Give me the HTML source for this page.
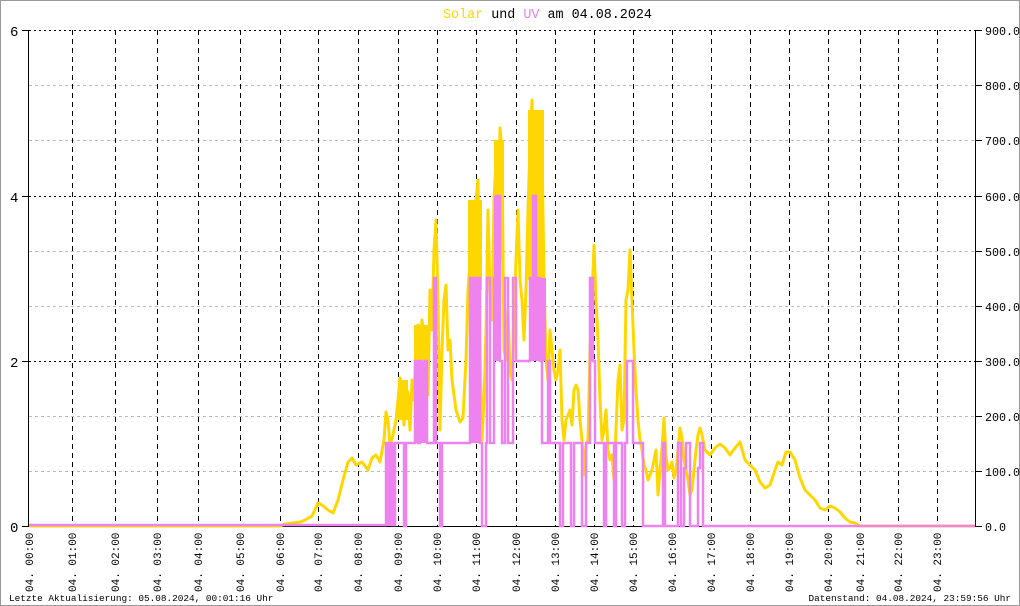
<!DOCTYPE html>
<html><head><meta charset="utf-8"><style>
html,body{margin:0;padding:0;background:#fff}
svg{display:block}
text{font-family:"Liberation Mono","DejaVu Sans Mono",monospace}
</style></head><body>
<svg width="1020" height="606" viewBox="0 0 1020 606" xmlns="http://www.w3.org/2000/svg">
<rect x="0.5" y="0.5" width="1019" height="605" fill="#fff" stroke="#999"/>
<text x="443" y="18" font-size="13.4" fill="#000"><tspan fill="#ffd700">Solar</tspan> und <tspan fill="#ee82ee">UV</tspan> am 04.08.2024</text>
<g stroke="#bbb" stroke-dasharray="3,3" stroke-width="1">
<path d="M29 85.5H975M29 140.5H975M29 251.5H975M29 306.5H975M29 416.5H975M29 471.5H975"/>
</g>
<g stroke="#000" stroke-dasharray="2,3" stroke-width="1">
<path d="M29 30.5H975M29 196.5H975M29 361.5H975"/>
</g>
<g stroke="#000" stroke-dasharray="5,4" stroke-width="1">
<path d="M72.5 30V526M115.5 30V526M157.5 30V526M198.5 30V526M240.5 30V526M280.5 30V526M318.5 30V526M358.5 30V526M398.5 30V526M437.5 30V526M476.5 30V526M516.5 30V526M555.5 30V526M594.5 30V526M633.5 30V526M672.5 30V526M711.5 30V526M750.5 30V526M789.5 30V526M828.5 30V526M860.5 30V526M898.5 30V526M937.5 30V526"/>
</g>
<g stroke="#000" stroke-width="1">
<path d="M28.5 30V527M975.5 30V527M28 526.5H976"/>
<path d="M22 30.5H29M22 196.5H29M22 361.5H29M22 526.5H29"/>
<path d="M975 30.5H982M975 85.5H982M975 140.5H982M975 196.5H982M975 251.5H982M975 306.5H982M975 361.5H982M975 416.5H982M975 471.5H982M975 526.5H982"/>
</g>
<g font-size="14" fill="#000">
<text x="10" y="36">6</text><text x="10" y="202">4</text><text x="10" y="367">2</text><text x="10" y="532">0</text>
</g>
<g font-size="11.7" fill="#000">
<text x="985" y="35">900.0</text><text x="985" y="90">800.0</text><text x="985" y="145">700.0</text><text x="985" y="201">600.0</text><text x="985" y="256">500.0</text><text x="985" y="311">400.0</text><text x="985" y="366">300.0</text><text x="985" y="421">200.0</text><text x="985" y="476">100.0</text><text x="985" y="531">0.0</text>
</g>
<!-- dense solar fills -->
<g fill="#ffd700">
<rect x="414" y="325" width="14" height="70"/>
<rect x="468" y="200" width="14" height="90"/>
<rect x="494" y="140" width="10" height="120"/>
<rect x="528" y="110" width="16" height="170"/>
<rect x="398" y="380" width="10" height="40"/>
</g>
<polyline fill="none" stroke="#ffd700" stroke-width="3" stroke-linejoin="round" points="29,526 280,526 285,524 300,522 305,520 312,516 318,503 322,505 328,510 333,513 338,500 343,480 348,462 352,458 356,465 362,462 368,470 372,458 376,455 380,462 384,440 386,412 388,420 390,445 393,435 396,420 398,400 400,378 402,395 404,425 406,400 408,392 410,430 412,380 414,400 416,350 418,325 420,355 422,320 424,345 426,330 428,395 430,290 432,330 434,250 436,220 438,300 440,430 442,350 444,300 446,285 448,350 450,340 452,380 456,410 460,422 463,418 466,360 468,290 470,262 472,210 474,240 476,200 478,180 480,350 482,440 484,400 486,330 488,210 490,290 492,320 494,200 496,160 498,240 500,128 502,150 504,350 506,360 508,310 510,370 512,380 514,330 516,260 518,210 520,280 522,300 524,340 526,290 528,210 530,145 532,100 534,200 536,120 538,160 540,210 542,150 544,280 546,360 548,380 550,330 552,350 554,370 556,380 558,370 560,350 562,420 564,440 566,420 568,415 570,410 572,425 574,390 576,385 578,390 580,420 582,440 584,475 586,445 588,440 590,350 592,300 594,245 596,300 598,340 600,400 602,440 604,430 606,410 608,450 610,460 612,455 614,480 616,430 618,380 620,365 622,430 624,420 626,300 628,290 630,250 632,300 634,350 636,390 638,420 640,440 642,450 644,465 646,470 648,480 650,475 652,470 654,460 656,450 658,495 660,470 662,448 664,418 666,455 668,470 670,468 672,462 674,478 676,470 678,450 680,428 682,438 684,460 686,470 688,480 690,495 692,490 694,470 696,450 698,435 700,428 702,435 705,450 710,455 715,448 720,444 725,448 730,455 735,448 740,442 745,460 750,465 755,470 760,482 765,488 770,485 775,470 778,462 782,465 786,452 790,452 795,460 800,478 805,490 810,495 815,500 820,508 825,510 830,506 835,508 840,512 845,518 850,522 855,523 860,526 975,526"/>
<!-- dense UV fills -->
<g fill="#ee82ee">
<rect x="386" y="443" width="10" height="83"/>
<rect x="415" y="361" width="12" height="82"/>
<rect x="470" y="278" width="10" height="165"/>
<rect x="494" y="196" width="6" height="165"/>
<rect x="530" y="278" width="16" height="83"/>
<rect x="533" y="196" width="3" height="82"/>
<rect x="590" y="278" width="4" height="83"/>
</g>
<path fill="none" stroke="#ee82ee" stroke-width="2.5" d="M29,525 H386 V443 H392 V525 H395 V443 H404 V526 H406 V443 H415 V361 H418 V443 H420 V361 H422 V400 H425 V361 H427 V443 H434 V278 H436 V443 H440 V526 H442 V443 H470 V278 H472 V361 H474 V278 H480 V443 H482 V526 H486 V443 H487 V278 H490 V443 H494 V278 H496 V196 H500 V361 H502 V443 H505 V278 H508 V443 H513 V278 H516 V361 H530 V278 H533 V196 H536 V278 H540 V361 H542 V443 H548 V361 H550 V443 H560 V526 H563 V443 H571 V526 H574 V443 H582 V526 H586 V443 H590 V278 H593 V361 H595 V443 H604 V526 H606 V443 H614 V526 H616 V443 H622 V526 H625 V443 H627 V361 H633 V443 H643 V526 H663 V443 H665 V526 H678 V443 H681 V526 H684 V468 H686 V443 H690 V526 H698 V468 H700 V443 H703 V526 H975"/>
<g font-size="11" fill="#000">
<text transform="translate(33,592) rotate(-90)">04. 00:00</text>
<text transform="translate(76,592) rotate(-90)">04. 01:00</text>
<text transform="translate(119,592) rotate(-90)">04. 02:00</text>
<text transform="translate(161,592) rotate(-90)">04. 03:00</text>
<text transform="translate(202,592) rotate(-90)">04. 04:00</text>
<text transform="translate(244,592) rotate(-90)">04. 05:00</text>
<text transform="translate(284,592) rotate(-90)">04. 06:00</text>
<text transform="translate(322,592) rotate(-90)">04. 07:00</text>
<text transform="translate(362,592) rotate(-90)">04. 08:00</text>
<text transform="translate(402,592) rotate(-90)">04. 09:00</text>
<text transform="translate(441,592) rotate(-90)">04. 10:00</text>
<text transform="translate(480,592) rotate(-90)">04. 11:00</text>
<text transform="translate(520,592) rotate(-90)">04. 12:00</text>
<text transform="translate(559,592) rotate(-90)">04. 13:00</text>
<text transform="translate(598,592) rotate(-90)">04. 14:00</text>
<text transform="translate(637,592) rotate(-90)">04. 15:00</text>
<text transform="translate(676,592) rotate(-90)">04. 16:00</text>
<text transform="translate(715,592) rotate(-90)">04. 17:00</text>
<text transform="translate(754,592) rotate(-90)">04. 18:00</text>
<text transform="translate(793,592) rotate(-90)">04. 19:00</text>
<text transform="translate(832,592) rotate(-90)">04. 20:00</text>
<text transform="translate(864,592) rotate(-90)">04. 21:00</text>
<text transform="translate(902,592) rotate(-90)">04. 22:00</text>
<text transform="translate(941,592) rotate(-90)">04. 23:00</text>
</g>
<text x="9" y="601" font-size="9.4" fill="#000">Letzte Aktualisierung: 05.08.2024, 00:01:16 Uhr</text>
<text x="1011" y="601" font-size="9.4" fill="#000" text-anchor="end">Datenstand: 04.08.2024, 23:59:56 Uhr</text>
</svg>
</body></html>
